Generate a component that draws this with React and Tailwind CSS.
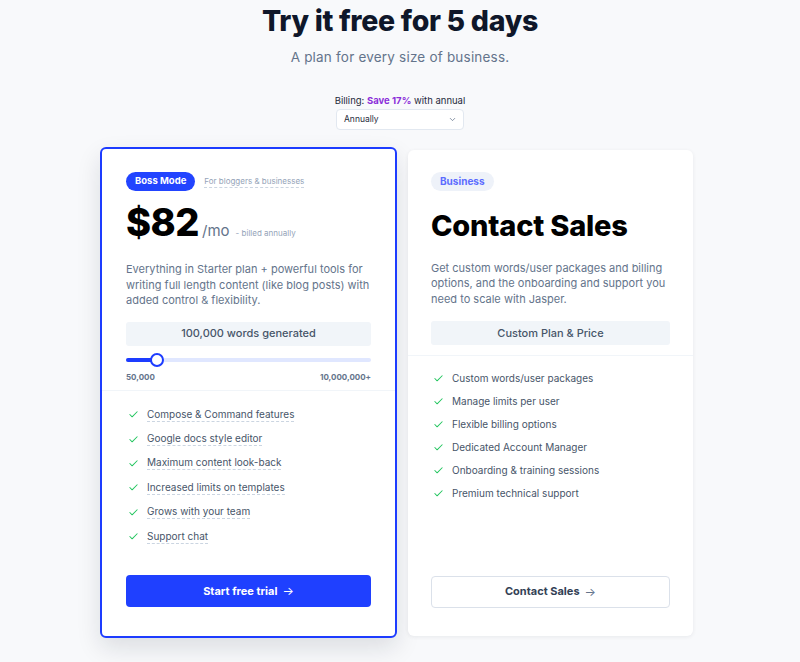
import React from "react";
import { Check, ChevronDown } from "lucide-react";

const left = [
  "Compose & Command features",
  "Google docs style editor",
  "Maximum content look-back",
  "Increased limits on templates",
  "Grows with your team",
  "Support chat",
];
const right = [
  "Custom words/user packages",
  "Manage limits per user",
  "Flexible billing options",
  "Dedicated Account Manager",
  "Onboarding & training sessions",
  "Premium technical support",
];

export default function App() {
  return (
    <div className="w-[800px] h-[662px] overflow-hidden bg-[#f8f9fb] text-[#0f172a]" style={{ fontFamily: "Inter, 'Noto Sans', sans-serif" }}>
      <div className="flex flex-col items-center">
        <h1 className="mt-[3px] text-[28.5px] leading-[36px] font-extrabold tracking-[-0.3px] text-[#0f172a]">Try it free for 5 days</h1>
        <p className="mt-[9px] text-[13.5px] leading-[18px] text-[#64748b] tracking-[0.2px]">A plan for every size of business.</p>
        <div className="mt-[29px] text-[9.5px] leading-[12px] text-[#1e293b]">
          Billing: <span className="font-bold text-[#8b2fd9]">Save 17%</span> with annual
        </div>
        <div className="mt-[2px] w-[128px] h-[21px] bg-white border border-[#e2e8f0] rounded-[4px] flex items-center justify-between pl-[7px] pr-[6px] text-[8.5px] text-[#1e293b]">
          <span>Annually</span>
          <ChevronDown size={9} strokeWidth={2} className="text-[#64748b]" />
        </div>
      </div>

      <div className="mt-[17px] pl-[100px] flex items-center gap-[11px]">
        {/* Left card */}
        <div className="w-[297px] h-[491px] bg-white border-2 border-[#1d3cff] rounded-[6px] shadow-[0_10px_25px_rgba(15,23,42,0.12)] flex flex-col">
          <div className="px-[24px] pt-[23px]">
            <div className="flex items-center gap-[9px]">
              <span className="h-[19px] px-[9px] rounded-full bg-[#2244ff] text-white text-[9.5px] font-bold flex items-center">Boss Mode</span>
              <span className="text-[8px] text-[#94a3b8] leading-[12px] border-b border-dashed border-[#cbd5e1]">For bloggers &amp; businesses</span>
            </div>
            <div className="mt-[7px] flex items-baseline">
              <span className="text-[38px] leading-[48px] font-extrabold text-black tracking-[-0.5px]">$82</span>
              <span className="ml-[3px] text-[15px] text-[#64748b]">/mo</span>
              <span className="ml-[6px] text-[8px] text-[#94a3b8]">- billed annually</span>
            </div>
            <p className="mt-[16px] text-[11px] leading-[15.5px] text-[#64748b]">
              Everything in Starter plan + powerful tools for writing full length content (like blog posts) with added control &amp; flexibility.
            </p>
            <div className="mt-[13px] h-[24px] rounded-[3px] bg-[#f1f5f9] flex items-center justify-center text-[11px] font-medium text-[#475569]">100,000 words generated</div>
            <div className="relative mt-[12px] h-[4px] rounded-full bg-[#e0e7ff]">
              <div className="absolute left-0 top-0 h-[4px] w-[31px] rounded-full bg-[#1d3cff]" />
              <div className="absolute left-[24px] top-[-5px] w-[14px] h-[14px] rounded-full bg-white border-2 border-[#1d3cff]" />
            </div>
            <div className="mt-[9px] flex justify-between text-[8px] font-bold text-[#64748b]">
              <span>50,000</span>
              <span>10,000,000+</span>
            </div>
          </div>
          <div className="mt-[7px] border-t border-[#f1f5f9]" />
          <ul className="px-[24px] pt-[17px] flex flex-col gap-[10px]">
            {left.map((t) => (
              <li key={t} className="flex items-center h-[14.4px]">
                <Check size={11} strokeWidth={2.2} className="text-[#22c55e] ml-[2px]" />
                <span className="ml-[8px] text-[10px] leading-[13px] text-[#475569] border-b border-dashed border-[#cbd5e1]">{t}</span>
              </li>
            ))}
          </ul>
          <div className="mt-auto px-[24px] pb-[29px]">
            <button className="w-full h-[32px] rounded-[4px] bg-[#1f40ff] text-white text-[11px] font-bold flex items-center justify-center gap-[5px]">
              Start free trial <span className="text-[12px] font-normal">→</span>
            </button>
          </div>
        </div>

        {/* Right card */}
        <div className="w-[285px] h-[486px] bg-white rounded-[6px] shadow-[0_1px_4px_rgba(15,23,42,0.07)] flex flex-col">
          <div className="px-[23px] pt-[22px]">
            <div className="flex">
              <span className="flex h-[19px] px-[9px] rounded-full bg-[#eef2f9] text-[#5b6cff] text-[10px] font-bold items-center">Business</span>
            </div>
            <div className="mt-[17px] text-[29px] leading-[36px] font-extrabold text-black tracking-[-0.2px]">Contact Sales</div>
            <p className="mt-[17px] text-[11px] leading-[15.5px] text-[#64748b]">
              Get custom words/user packages and billing options, and the onboarding and support you need to scale with Jasper.
            </p>
            <div className="mt-[14px] h-[24px] rounded-[3px] bg-[#f1f5f9] flex items-center justify-center text-[11px] font-medium text-[#475569]">Custom Plan &amp; Price</div>
          </div>
          <div className="mt-[10px] border-t border-[#f1f5f9]" />
          <ul className="px-[23px] pt-[15px] flex flex-col gap-[9px]">
            {right.map((t) => (
              <li key={t} className="flex items-center h-[14px]">
                <Check size={11} strokeWidth={2.2} className="text-[#22c55e] ml-[2px]" />
                <span className="ml-[8px] text-[10px] leading-[13px] text-[#475569]">{t}</span>
              </li>
            ))}
          </ul>
          <div className="mt-auto px-[23px] pb-[28px]">
            <button className="w-full h-[32px] rounded-[4px] bg-white border border-[#dbe1ea] text-[#334155] text-[11px] font-bold flex items-center justify-center gap-[5px]">
              Contact Sales <span className="text-[12px] font-normal text-[#64748b]">→</span>
            </button>
          </div>
        </div>
      </div>
    </div>
  );
}
